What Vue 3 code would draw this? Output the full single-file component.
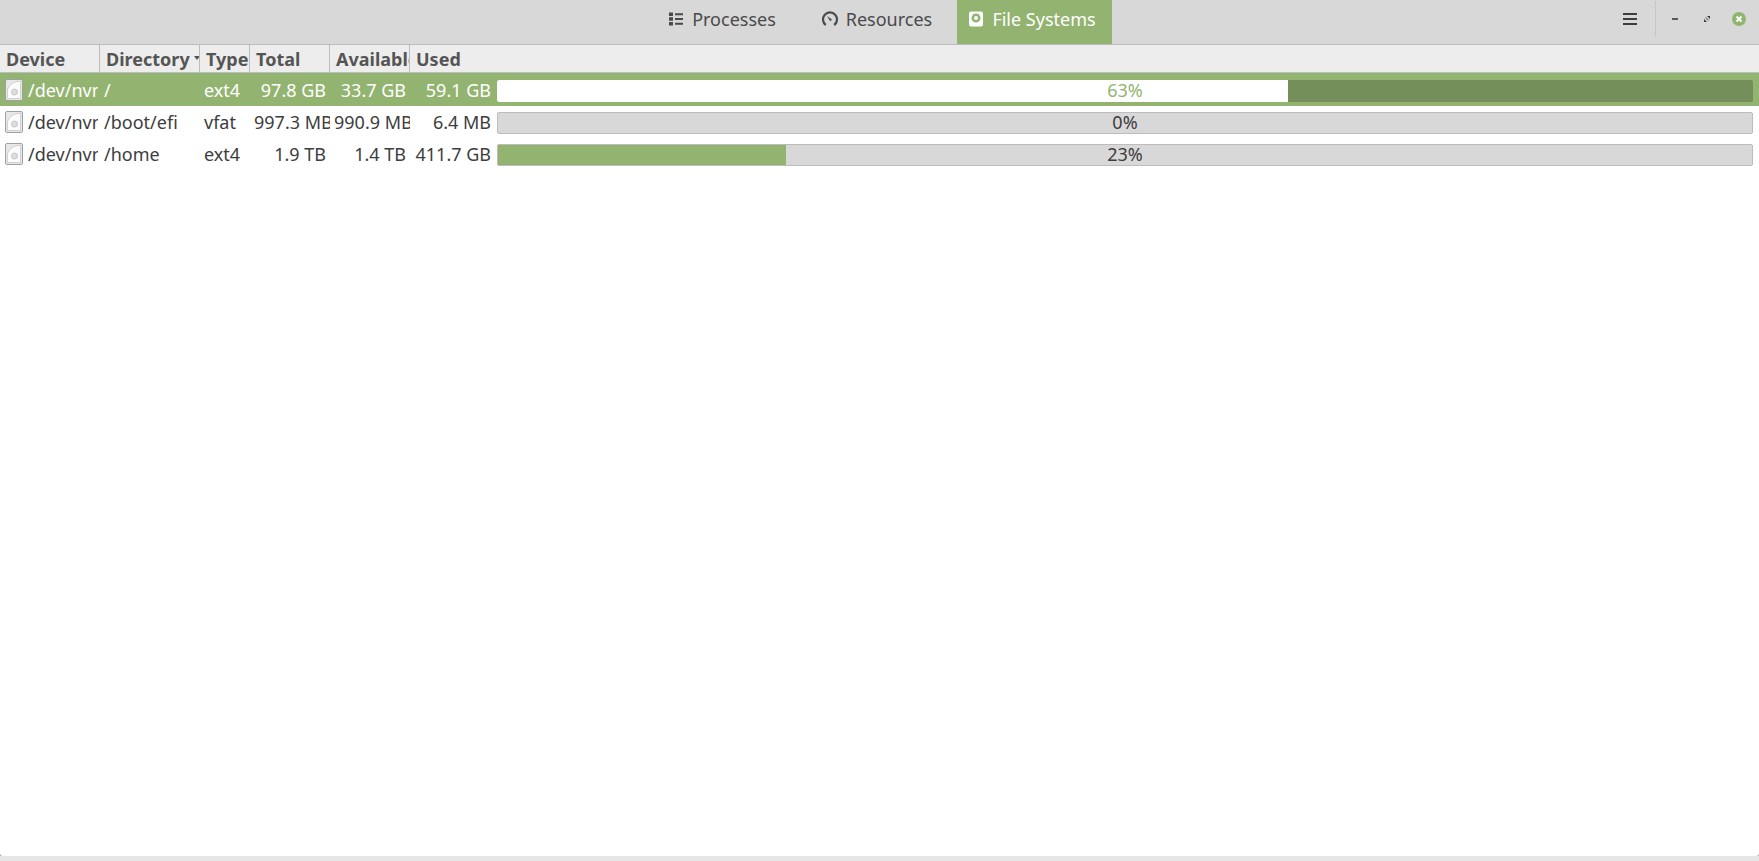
<script setup>
const tabs = [
  { name: 'Processes', icon: 'list' },
  { name: 'Resources', icon: 'gauge' },
  { name: 'File Systems', icon: 'disk', active: true }
]

const columns = ['Device', 'Directory', 'Type', 'Total', 'Available', 'Used']

const rows = [
  { device: '/dev/nvme0n1p2', dir: '/', type: 'ext4', total: '97.8 GB', avail: '33.7 GB', used: '59.1 GB', pct: 63, selected: true },
  { device: '/dev/nvme0n1p1', dir: '/boot/efi', type: 'vfat', total: '997.3 MB', avail: '990.9 MB', used: '6.4 MB', pct: 0, clip: true },
  { device: '/dev/nvme0n1p3', dir: '/home', type: 'ext4', total: '1.9 TB', avail: '1.4 TB', used: '411.7 GB', pct: 23 }
]
</script>

<template>
  <div class="window">
    <header class="titlebar">
      <nav class="tabs">
        <button v-for="tab in tabs" :key="tab.name" class="tab" :class="{ active: tab.active }">
          <svg v-if="tab.icon === 'list'" width="16" height="16" viewBox="0 0 16 16">
            <path fill="currentColor" d="M1 1.500h4v3.500H1zM1 6.300h4v3.500H1zM1 11h4v3.500H1zM7 2.200h8v2H7zM7 7h8v2H7zM7 11.800h8v2H7z" />
          </svg>
          <svg v-else-if="tab.icon === 'gauge'" width="16" height="16" viewBox="0 0 16 16">
            <path fill="none" stroke="currentColor" stroke-width="2.200" d="M3.800 14A7 7 0 1 1 12.200 14" />
            <path fill="currentColor" d="M5 5l5 3.500-1.800 1.800z" />
          </svg>
          <svg v-else width="16" height="16" viewBox="0 0 16 16">
            <path fill="currentColor" fill-rule="evenodd" d="M3 0.500h10a2 2 0 0 1 2 2v11a2 2 0 0 1-2 2H3a2 2 0 0 1-2-2v-11a2 2 0 0 1 2-2zM8 2.500a4.500 4.500 0 1 0 0 9 4.500 4.500 0 0 0 0-9zM8 5a2 2 0 1 1 0 4 2 2 0 0 1 0-4z" />
          </svg>
          <span>{{ tab.name }}</span>
        </button>
      </nav>
      <div class="controls">
        <svg class="menu" width="14" height="12" viewBox="0 0 14 12">
          <path fill="#3d3d3d" d="M0 0h14v2H0zM0 5h14v2H0zM0 10h14v2H0z" />
        </svg>
        <span class="divider"></span>
        <svg class="win-min" width="6" height="2" viewBox="0 0 6 2">
          <path fill="#5a5a5a" d="M0 0h6v2H0z" />
        </svg>
        <svg class="win-max" width="6" height="6" viewBox="0 0 6 6">
          <path fill="#3d3d3d" d="M0 3v3h3zM3 0h3v3z" />
          <path fill="#8a8a8a" d="M1 2l1-1 3 3-1 1z" />
        </svg>
        <svg class="win-close" width="14" height="14" viewBox="0 0 14 14">
          <circle cx="7" cy="7" r="7" fill="#8fb56f" />
          <path stroke="#fff" stroke-width="2" d="M4.500 4.500l5 5M9.500 4.500l-5 5" />
        </svg>
      </div>
    </header>

    <div class="tree">
      <div class="head">
        <div v-for="col in columns" :key="col" class="head-cell">
          {{ col }}
          <span v-if="col === 'Directory'" class="sort"></span>
        </div>
      </div>

      <div v-for="row in rows" :key="row.device" class="row" :class="{ selected: row.selected }">
        <div class="cell device">
          <svg class="disk" width="18" height="22" viewBox="0 0 18 22">
            <rect x="0.500" y="0.500" width="17" height="21" rx="1.500" fill="#e8e8e8" stroke="#a0a0a0" />
            <path fill="#fcfcfc" stroke="#d0d0d0" d="M2.500 19.500V11C3 7 8 3 12 2.500h3.500v17z" />
            <circle cx="9.500" cy="13" r="3" fill="#dedede" stroke="#c6c6c6" />
          </svg>
          <span>{{ row.device }}</span>
        </div>
        <div class="cell">{{ row.dir }}</div>
        <div class="cell">{{ row.type }}</div>
        <div class="cell num" :class="{ clip: row.clip }">{{ row.total }}</div>
        <div class="cell num" :class="{ clip: row.clip }">{{ row.avail }}</div>
        <div class="cell num used">{{ row.used }}</div>
        <div class="bar">
          <div class="fill" :style="{ width: row.pct + '%' }"></div>
          <span class="pct">{{ row.pct }}%</span>
        </div>
      </div>
    </div>
  </div>
</template>

<style>
html, body {
  margin: 0;
  background: #e6e6e6;
}
</style>

<style scoped>
.window {
  height: 856px;
  background: #fff;
  display: flex;
  flex-direction: column;
  font-family: "Noto Sans", "Open Sans", sans-serif;
  font-size: 18px;
  color: #3d3d3d;
  box-shadow: 0 1px 0 #a0a0a0, 0 2px 6px #888;
  border-radius: 0 0 3px 3px;
  overflow: hidden;
}

.titlebar {
  height: 44px;
  flex: none;
  position: relative;
  display: flex;
  justify-content: center;
  background: #d8d8d8;
  border-bottom: 1px solid #bcbcbc;
}

.tabs {
  display: flex;
}

.tab {
  display: flex;
  align-items: center;
  gap: 8px;
  height: 44px;
  width: 155px;
  justify-content: center;
  padding: 0 5px 7px 0;
  border: none;
  background: none;
  font: inherit;
  color: #4a4a4a;
}

.tab.active {
  background: #93b471;
  color: #fff;
}

.controls {
  position: absolute;
  top: 0;
  right: 0;
  height: 38px;
  width: 136px;
  display: flex;
  align-items: center;
}

.menu {
  margin-right: 18px;
}

.divider {
  width: 1px;
  height: 36px;
  background: #c6c6c6;
  margin-right: 16px;
}

.win-min {
  margin-right: 26px;
}

.win-max {
  margin-right: 22px;
}

.head,
.row {
  display: grid;
  grid-template-columns: 100px 100px 50px 80px 80px 87px 1fr;
}

.head {
  height: 27px;
  background: #ededed;
  border-bottom: 1px solid #bcbcbc;
  grid-template-columns: 100px 100px 50px 80px 80px 1fr;
}

.head-cell {
  position: relative;
  display: flex;
  align-items: center;
  padding-left: 6px;
  overflow: hidden;
  white-space: nowrap;
  font-weight: 700;
  color: #555;
  border-right: 1px solid #bcbcbc;
}

.head-cell:last-child {
  border-right: none;
}

.sort {
  position: absolute;
  right: -1px;
  top: 11px;
  border-left: 3px solid transparent;
  border-right: 3px solid transparent;
  border-top: 4px solid #555;
}

.row {
  height: 32px;
  align-items: center;
}

.row.selected {
  height: 33px;
  background: #93b471;
  color: #fff;
}

.cell {
  overflow: hidden;
  white-space: nowrap;
  padding-left: 4px;
}

.device {
  display: flex;
  align-items: center;
  gap: 5px;
  padding-left: 5px;
  margin-right: 2px;
}

.disk {
  flex: none;
}

.num {
  text-align: right;
  padding: 0 4px 0 0;
}

.num.clip {
  text-align: left;
  padding: 0 0 0 4px;
}

.num.used {
  padding-right: 6px;
}

.bar {
  position: relative;
  height: 22px;
  margin: 2px 6px 0 0;
  padding-bottom: 2px;
  background: #d8d8d8;
  border: 1px solid #bcbcbc;
  border-radius: 2px;
  box-sizing: border-box;
  display: flex;
  align-items: center;
  justify-content: center;
  color: #3d3d3d;
}

.fill {
  position: absolute;
  left: 0;
  top: 0;
  bottom: 0;
  background: #93b471;
}

.pct {
  position: relative;
}

.selected .bar {
  background: #758f5a;
  border: none;
  color: #93b471;
}

.selected .fill {
  background: #fff;
  border-radius: 2px 0 0 2px;
}
</style>
